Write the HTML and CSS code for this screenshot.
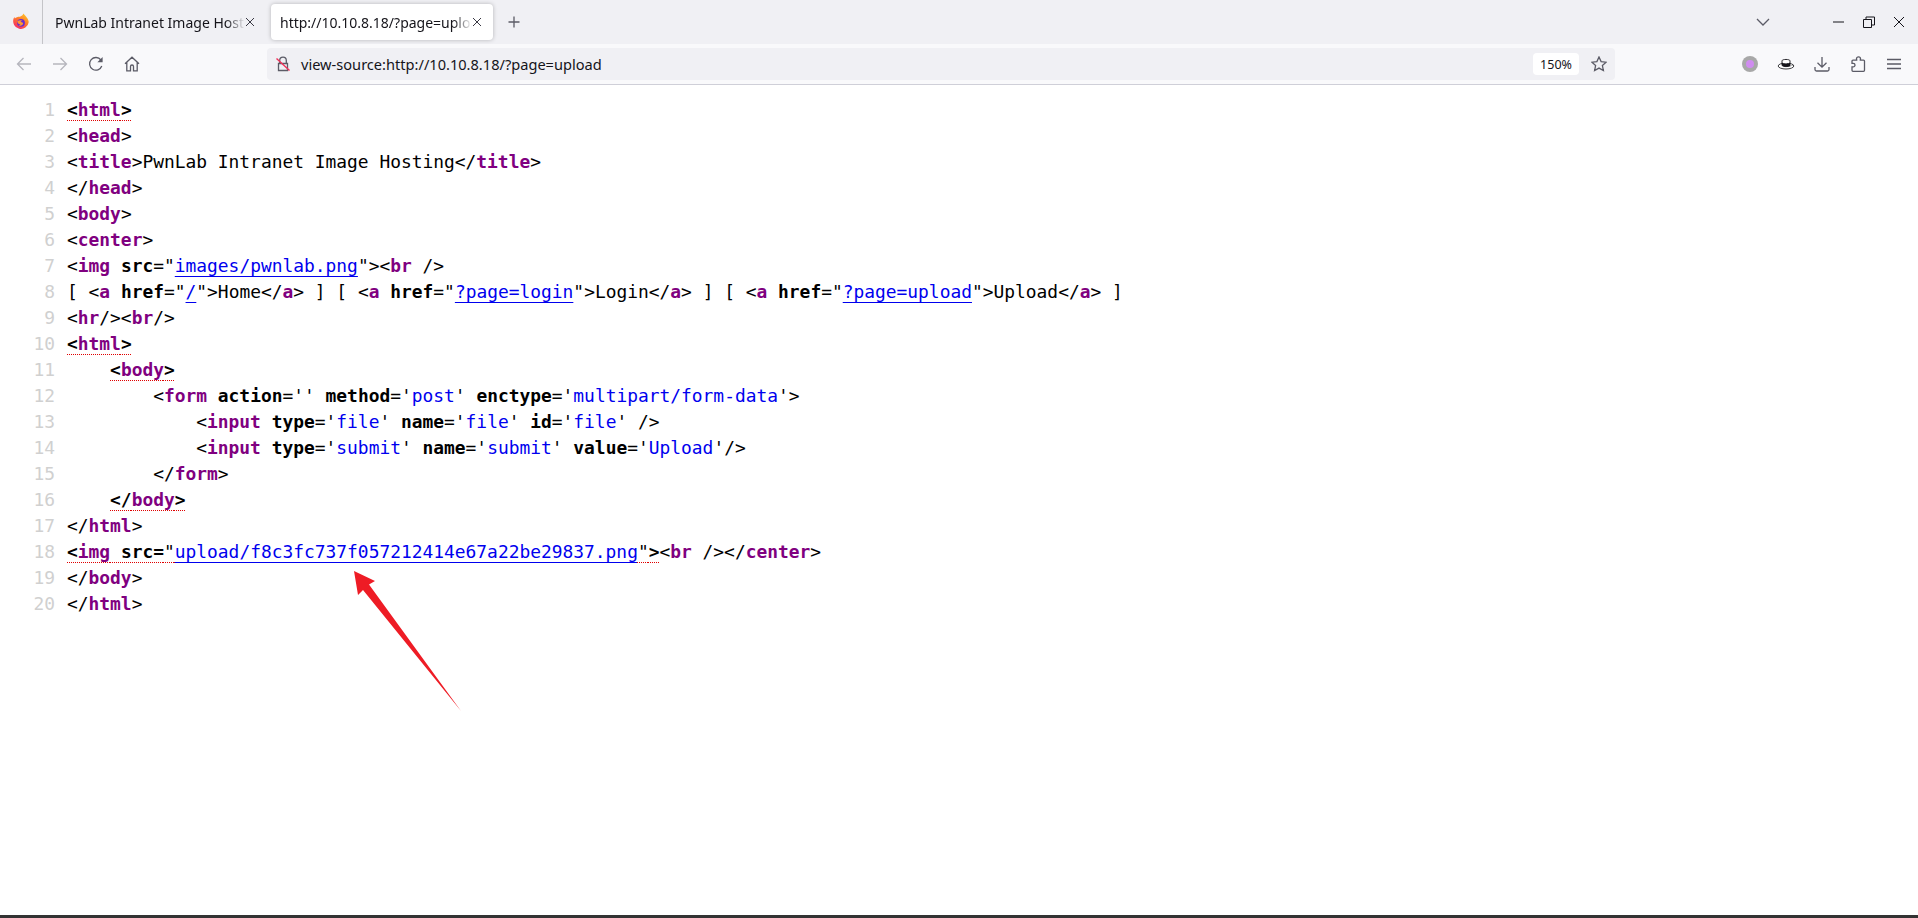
FILE: index.html
```
<!DOCTYPE html>
<html lang="en">
<head>
<meta charset="utf-8">
<title>view-source</title>
<link rel="stylesheet" href="styles.css">
</head>
<body>
<div class="window">
  <header class="tabbar">
    <div class="fx-cell">
      <svg class="fx" viewBox="0 0 18 18" width="18" height="18">
        <defs>
          <linearGradient id="fxg" x1="0.8" y1="0" x2="0.2" y2="1">
            <stop offset="0" stop-color="#ffc828"/><stop offset="0.45" stop-color="#ff7a2a"/><stop offset="1" stop-color="#f5256e"/>
          </linearGradient>
        </defs>
        <path d="M11.5 0.6c.6 1.4 2.6 2.6 3.6 4.4 1 1.5 1.6 2.8 1.6 4.2A7.8 7.8 0 1 1 1.6 5.6c.3-.7.6-1.2 1-1.6l.2 1.6C4 4 6.4 3.6 8 3.7c1.500-.6 3-1.500 3.500-3.100z" fill="url(#fxg)"/>
        <circle cx="9" cy="9.800" r="3.900" fill="#6a2bd0"/>
        <path d="M5.300 8.300c1.700-1.500 4-1.400 5.300-.5-1.300.1-1.800.7-1.900 1.300 1.500-.1 2.600.8 2.400 2-.5 1.400-3.200 2.300-5 .7 1 .4 2 .1 2.500-.5-1.600.2-3.300-1-3.300-3z" fill="#ff9a2e"/>
      </svg>
    </div>
    <div class="tab">
      <span class="tab-title">PwnLab Intranet Image Hosting</span>
      <svg class="ico-x" viewBox="0 0 10 10" width="10" height="10"><path d="M1 1l8 8M9 1l-8 8"/></svg>
    </div>
    <div class="tab tab-active">
      <span class="tab-title">http://10.10.8.18/?page=upload</span>
      <svg class="ico-x" viewBox="0 0 10 10" width="10" height="10"><path d="M1 1l8 8M9 1l-8 8"/></svg>
    </div>
    <div class="new-tab">
      <svg class="ico" viewBox="0 0 12 12" width="12" height="12"><path d="M6 .5v11M.5 6h11"/></svg>
    </div>
    <div class="win-area">
      <svg class="ico chevron" viewBox="0 0 14 8" width="14" height="8"><path d="M1 1l6 6 6-6"/></svg>
      <svg class="ico win-dark win-min" viewBox="0 0 12 12" width="12" height="12"><path d="M0 6h11"/></svg>
      <svg class="ico win-dark win-btn" viewBox="0 0 12 12" width="12" height="12"><path d="M.5 3.500h8v8h-8zM3 3.500V1h8.500v8H8.500"/></svg>
      <svg class="ico win-dark win-btn" viewBox="0 0 12 12" width="12" height="12"><path d="M1 1l10 10M11 1L1 11"/></svg>
    </div>
  </header>

  <nav class="toolbar">
    <span class="btn"><svg class="ico muted" viewBox="0 0 16 16" width="16" height="16"><path d="M15 8H1.500M7.500 2L1.500 8l6 6"/></svg></span>
    <span class="btn"><svg class="ico muted" viewBox="0 0 16 16" width="16" height="16"><path d="M1 8h13.500M8.500 2l6 6-6 6"/></svg></span>
    <span class="btn"><svg class="ico" viewBox="0 0 16 16" width="16" height="16"><path d="M13.800 10a6.300 6.300 0 1 1-.9-6"/><path class="solid" d="M14.600 1v5.200H9.400z"/></svg></span>
    <span class="btn"><svg class="ico" viewBox="0 0 16 16" width="16" height="16"><path d="M1 7.800L8 1.200l7 6.600M2.800 6.500v8.300h3.700v-4.300a1.500 1.500 0 0 1 3 0v4.300h3.700V6.500"/></svg></span>
    <div class="urlbar">
      <svg class="lock" viewBox="0 0 16 16" width="16" height="16">
        <path class="lock-body" d="M4.700 7V4.500a3.300 3.300 0 0 1 6.600 0V7M3.500 7.500h9v7h-9z"/>
        <path class="lock-slash" d="M1.500 2.500l13 12"/>
      </svg>
      <span class="url">view-source:http://10.10.8.18/?page=upload</span>
      <span class="zoom-pill">150%</span>
      <svg class="ico star" viewBox="0 0 16 16" width="16" height="16"><path d="M8 1l2.100 4.600 5 .6-3.700 3.400 1 5L8 12.100l-4.400 2.500 1-5L.9 6.200l5-.6z"/></svg>
    </div>
    <span class="tool tool-first"><span class="avatar"><span class="avatar-dot"></span></span></span>
    <span class="tool"><svg viewBox="0 0 18 14" width="18" height="14">
      <ellipse class="hat-brim" cx="9" cy="9" rx="7.800" ry="3"/>
      <path class="hat-top" d="M5 8.500V3.800C5 2 13 2 13 3.800v4.700C11 10 7 10 5 8.500z"/>
      <path class="hat-band" d="M5 5.500c2 1.200 6 1.200 8 0v3.300c1.500 0 3-.5 4-1-1.500 1.800-10 3-12 .4z"/>
    </svg></span>
    <span class="tool"><svg class="ico" viewBox="0 0 16 16" width="16" height="16"><path d="M8 1v10M3.500 6.800L8 11.200l4.500-4.400M1 11v2.500A1.500 1.500 0 0 0 2.500 15h11a1.500 1.500 0 0 0 1.500-1.500V11"/></svg></span>
    <span class="tool"><svg class="ico" viewBox="0 0 16 16" width="16" height="16"><path d="M6.500 2.800a2 2 0 0 1 4 0c0 .5-.2.900-.2 1.300h3.200c.6 0 1 .4 1 1v9.200c0 .6-.4 1-1 1H3c-.6 0-1-.4-1-1v-3.400h1.200a1.700 1.700 0 0 0 0-3.600H2V5.100c0-.6.400-1 1-1h3.700c0-.4-.2-.8-.2-1.300z"/></svg></span>
    <span class="tool"><svg class="ico" viewBox="0 0 14 12" width="14" height="12"><path d="M0 1.500h14M0 6h14M0 10.500h14"/></svg></span>
  </nav>

  <main class="source">
<div class="ln"><span class="num">1</span><code><span class="e">&lt;<b class="t">html</b>&gt;</span></code></div>
<div class="ln"><span class="num">2</span><code>&lt;<b class="t">head</b>&gt;</code></div>
<div class="ln"><span class="num">3</span><code>&lt;<b class="t">title</b>&gt;PwnLab Intranet Image Hosting&lt;/<b class="t">title</b>&gt;</code></div>
<div class="ln"><span class="num">4</span><code>&lt;/<b class="t">head</b>&gt;</code></div>
<div class="ln"><span class="num">5</span><code>&lt;<b class="t">body</b>&gt;</code></div>
<div class="ln"><span class="num">6</span><code>&lt;<b class="t">center</b>&gt;</code></div>
<div class="ln"><span class="num">7</span><code>&lt;<b class="t">img</b> <b class="a">src</b>="<a class="l">images/pwnlab.png</a>"&gt;&lt;<b class="t">br</b> /&gt;</code></div>
<div class="ln"><span class="num">8</span><code>[ &lt;<b class="t">a</b> <b class="a">href</b>="<a class="l">/</a>"&gt;Home&lt;/<b class="t">a</b>&gt; ] [ &lt;<b class="t">a</b> <b class="a">href</b>="<a class="l">?page=login</a>"&gt;Login&lt;/<b class="t">a</b>&gt; ] [ &lt;<b class="t">a</b> <b class="a">href</b>="<a class="l">?page=upload</a>"&gt;Upload&lt;/<b class="t">a</b>&gt; ]</code></div>
<div class="ln"><span class="num">9</span><code>&lt;<b class="t">hr</b>/&gt;&lt;<b class="t">br</b>/&gt;</code></div>
<div class="ln"><span class="num">10</span><code><span class="e">&lt;<b class="t">html</b>&gt;</span></code></div>
<div class="ln"><span class="num">11</span><code>    <span class="e">&lt;<b class="t">body</b>&gt;</span></code></div>
<div class="ln"><span class="num">12</span><code>        &lt;<b class="t">form</b> <b class="a">action</b>='' <b class="a">method</b>='<span class="v">post</span>' <b class="a">enctype</b>='<span class="v">multipart/form-data</span>'&gt;</code></div>
<div class="ln"><span class="num">13</span><code>            &lt;<b class="t">input</b> <b class="a">type</b>='<span class="v">file</span>' <b class="a">name</b>='<span class="v">file</span>' <b class="a">id</b>='<span class="v">file</span>' /&gt;</code></div>
<div class="ln"><span class="num">14</span><code>            &lt;<b class="t">input</b> <b class="a">type</b>='<span class="v">submit</span>' <b class="a">name</b>='<span class="v">submit</span>' <b class="a">value</b>='<span class="v">Upload</span>'/&gt;</code></div>
<div class="ln"><span class="num">15</span><code>        &lt;/<b class="t">form</b>&gt;</code></div>
<div class="ln"><span class="num">16</span><code>    <span class="e">&lt;/<b class="t">body</b>&gt;</span></code></div>
<div class="ln"><span class="num">17</span><code>&lt;/<b class="t">html</b>&gt;</code></div>
<div class="ln"><span class="num">18</span><code><span class="e">&lt;<b class="t">img</b> src=<span class="q">"</span><a class="l">upload/f8c3fc737f057212414e67a22be29837.png</a><span class="q">"</span>&gt;</span>&lt;<b class="t">br</b> /&gt;&lt;/<b class="t">center</b>&gt;</code></div>
<div class="ln"><span class="num">19</span><code>&lt;/<b class="t">body</b>&gt;</code></div>
<div class="ln"><span class="num">20</span><code>&lt;/<b class="t">html</b>&gt;</code></div>
    <svg class="arrow" viewBox="0 0 112 145" width="112" height="145">
      <path d="M3 1L24 11 18 14.500 110 141 12 20 7 25z"/>
    </svg>
  </main>
  <div class="bottom-edge"></div>
</div>
</body>
</html>
```
FILE: styles.css
```
html, body {
  margin: 0;
  padding: 0;
  height: 100%;
  overflow: hidden;
  background: #fff;
}

.window {
  display: flex;
  flex-direction: column;
  height: 918px;
  font-family: "Noto Sans", sans-serif;
  color: #15141a;
}

svg { display: block; flex: none; }

.ico, .ico-x {
  fill: none;
  stroke: #5b5b66;
  stroke-width: 1.300;
}
.ico .solid { fill: #5b5b66; stroke: none; }
.ico.muted { stroke: #b6b6bd; }

/* tab strip */
.tabbar {
  display: flex;
  align-items: center;
  height: 44px;
  background: #f0f0f4;
  flex: none;
}
.fx-cell {
  display: flex;
  align-items: center;
  justify-content: center;
  width: 42px;
  height: 44px;
  border-right: 1px solid #c4c4c8;
  flex: none;
}
.tab {
  display: flex;
  align-items: center;
  width: 223px;
  height: 36px;
  box-sizing: border-box;
  padding: 0 0 0 12px;
  margin-right: 5px;
  font-size: 14px;
  border-radius: 4px;
}
.tab-active {
  width: 222px;
  padding-left: 9px;
  background: #fff;
  box-shadow: 0 0 4px rgba(0, 0, 0, 0.25);
  margin-right: 0;
}
.tab-title {
  flex: 1;
  min-width: 0;
  overflow: hidden;
  white-space: nowrap;
  -webkit-mask-image: linear-gradient(to right, #000 90%, transparent 100%);
  mask-image: linear-gradient(to right, #000 90%, transparent 100%);
}
.ico-x { margin: 0 11px 0 0; stroke: #3a3944; stroke-width: 1; }
.new-tab {
  display: flex;
  align-items: center;
  justify-content: center;
  width: 42px;
  flex: none;
}
.win-area {
  display: flex;
  align-items: center;
  margin-left: auto;
  padding-right: 13px;
}
.chevron { margin-right: 63px; }
.win-dark { stroke: #15141a; stroke-width: 1; }
.win-btn { margin-left: 18px; }

/* nav toolbar */
.toolbar {
  display: flex;
  align-items: center;
  height: 40px;
  background: #f9f9fb;
  border-bottom: 1px solid #cfcfd8;
  flex: none;
  padding-left: 6px;
}
.btn {
  display: flex;
  align-items: center;
  justify-content: center;
  width: 36px;
  height: 32px;
  flex: none;
}
.urlbar {
  display: flex;
  align-items: center;
  width: 1348px;
  height: 32px;
  margin-left: 117px;
  background: #f0f0f4;
  border-radius: 4px;
  flex: none;
  box-sizing: border-box;
  padding-left: 8px;
}
.lock { margin-right: 10px; }
.lock-body { fill: none; stroke: #5b5b66; stroke-width: 1.300; }
.lock-slash { stroke: #f0325a; stroke-width: 1.400; }
.url {
  font-size: 14.600px;
  flex: 1;
}
.zoom-pill {
  display: flex;
  align-items: center;
  justify-content: center;
  width: 46px;
  height: 22px;
  background: #fff;
  border-radius: 4px;
  font-size: 12.500px;
}
.star { margin: 0 8px 0 12px; }

.tool {
  display: flex;
  align-items: center;
  justify-content: center;
  width: 36px;
  height: 32px;
  flex: none;
}
.tool-first { margin-left: 117px; }
.avatar {
  display: flex;
  align-items: center;
  justify-content: center;
  width: 16px;
  height: 16px;
  border-radius: 50%;
  background: #a8a8a8;
}
.avatar-dot {
  width: 8px;
  height: 8px;
  border-radius: 50%;
  background: #d08cf0;
}
.hat-brim { fill: #fff; stroke: #2a2a2e; stroke-width: 0.900; }
.hat-top { fill: #fff; stroke: #15141a; stroke-width: 0.900; }
.hat-band { fill: #15141a; }

/* view-source document */
.source {
  position: relative;
  flex: 1;
  padding-top: 12px;
  background: #fff;
  box-sizing: border-box;
  font-family: "DejaVu Sans Mono", monospace;
  font-size: 17.900px;
  line-height: 26px;
  color: #000;
}
.ln {
  display: flex;
  height: 26px;
}
.num {
  width: 55px;
  flex: none;
  text-align: right;
  color: #d0d0d0;
}
code {
  font: inherit;
  margin-left: 12px;
  white-space: pre;
}
.t { color: #800080; font-weight: 700; }
.a { color: #000; font-weight: 700; }
.v { color: #0000ee; }
.l {
  color: #0000ee;
  font-weight: 400;
  text-decoration: underline 1px;
  text-decoration-skip-ink: none;
  text-underline-offset: 4px;
}
.e {
  font-weight: 700;
  text-decoration: underline dotted #e00000 1px;
  text-decoration-skip-ink: none;
  text-underline-offset: 4px;
}
.q { font-weight: 400; }
.arrow {
  position: absolute;
  left: 351px;
  top: 485px;
}
.arrow path { fill: #ee1c25; }

.bottom-edge {
  height: 3px;
  background: #333;
  flex: none;
}
```
